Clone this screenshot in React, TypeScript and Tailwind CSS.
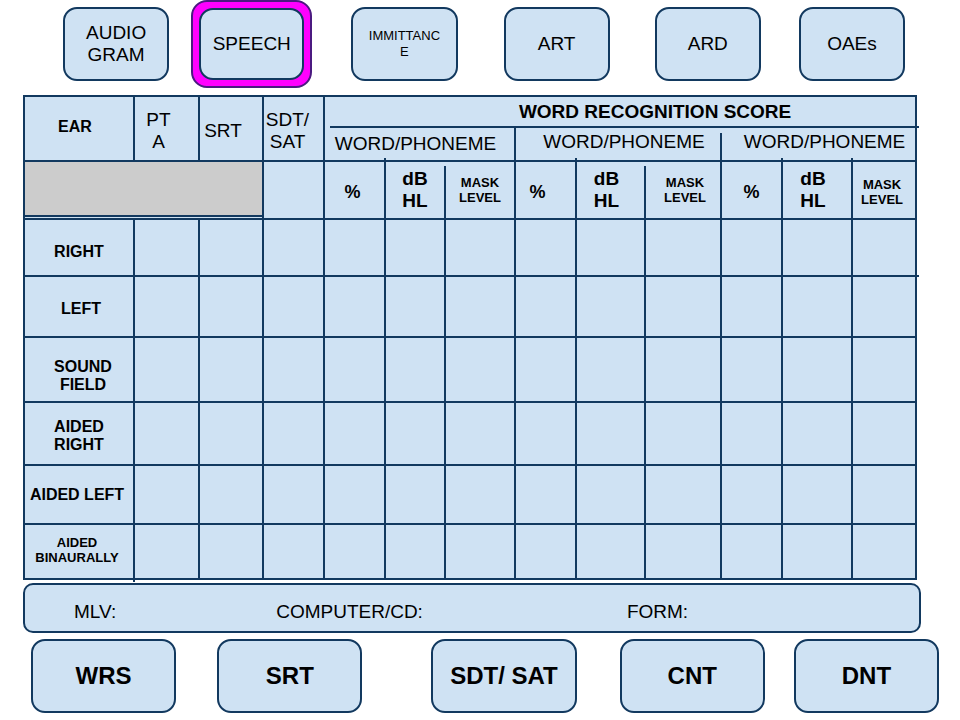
import React from "react";

const TABS = [
  { label: "AUDIO GRAM", box: "", text: "text-[19px] leading-[22px] px-4" },
  { label: "SPEECH", box: "ml-[22px]", text: "text-[19px] leading-[22px]", active: true },
  { label: "IMMITTANCE", box: "ml-[39px]", text: "text-[13px] leading-4 px-3 break-all" },
  { label: "ART", box: "ml-[46px]", text: "text-[19px] leading-[22px]" },
  { label: "ARD", box: "ml-[45px]", text: "text-[19px] leading-[22px]" },
  { label: "OAEs", box: "ml-[38px]", text: "text-[19px] leading-[22px]" },
];

const COLUMNS = [
  "w-[110px]",
  "w-[65px]",
  "w-[64px]",
  "w-[61px]",
  "w-[61px]",
  "w-[60px]",
  "w-[70px]",
  "w-[61px]",
  "w-[69px]",
  "w-[76px]",
  "w-[61px]",
  "w-[70px]",
  "w-[64px]",
];

const ROWS = [
  {
    lines: ["RIGHT"],
    height: "h-[57px]",
    text: "text-base leading-[18px] pt-2",
    last: "relative after:absolute after:-bottom-[2px] after:-right-1 after:h-[2px] after:w-1 after:bg-[#12395f]",
  },
  { lines: ["LEFT"], height: "h-[61px]", text: "text-base leading-[18px] pl-1 pt-1", last: "" },
  { lines: ["SOUND", "FIELD"], height: "h-[65px]", text: "text-base leading-[18px] pl-2 pt-3", last: "" },
  { lines: ["AIDED", "RIGHT"], height: "h-[63px]", text: "text-base leading-[18px] pt-1", last: "" },
  { lines: ["AIDED LEFT"], height: "h-[59px]", text: "text-base leading-[18px] pr-1 whitespace-nowrap", last: "" },
  {
    lines: ["AIDED", "BINAURALLY"],
    height: "h-[55px]",
    text: "relative text-[13px] leading-[15px] pb-1 pr-1 after:absolute after:-bottom-1 after:-right-[2px] after:h-1 after:w-[2px] after:bg-[#12395f]",
    last: "",
  },
];

const LINE_ABOVE =
  "relative after:absolute after:-left-[2px] after:-top-1 after:h-1 after:w-[2px] after:bg-[#12395f]";
const LINE_GAP =
  "relative after:absolute after:-left-[2px] after:top-0 after:h-1 after:w-[2px] after:bg-[#cfe2f3]";

const GROUPS = [
  { text: "pr-2", percent: "pr-1", level: "", mask: LINE_GAP },
  { text: "pl-3 pb-1", percent: "pr-4", level: "pr-2", mask: `pl-1 ${LINE_GAP}` },
  {
    text: `pl-3 pb-1 relative after:absolute after:-left-[2px] after:top-px after:h-[5px] after:w-[2px] after:bg-[#cfe2f3]`,
    percent: "",
    level: "pr-2",
    mask: `pt-1 pr-1 ${LINE_ABOVE}`,
  },
];

const FIELDS = [
  { id: "mlv", label: "MLV:", grow: "grow-[200]" },
  { id: "computer", label: "COMPUTER/CD:", grow: "grow-[347]" },
  { id: "form", label: "FORM:", grow: "grow-[289]" },
];

const ACTIONS = [
  { label: "WRS", box: "" },
  { label: "SRT", box: "ml-[41px]" },
  { label: "SDT/ SAT", box: "ml-[69px]" },
  { label: "CNT", box: "ml-[43px]" },
  { label: "DNT", box: "ml-[29px]" },
];

const cell = "border-2 border-[#12395f] p-0";
const button =
  "flex items-center justify-center rounded-[14px] border-2 border-[#12395f] bg-[#cfe2f3] text-center";

function Lines({ items }: { items: string[] }) {
  return (
    <>
      {items.map((line) => (
        <span key={line} className="block">
          {line}
        </span>
      ))}
    </>
  );
}

function Tabs() {
  return (
    <nav className="flex h-[88px] items-center pl-[63px] pr-[55px]">
      {TABS.map((tab) =>
        tab.active ? (
          <div
            key={tab.label}
            className={`flex h-full grow basis-[121px] rounded-[16px] border-2 border-[#4b1a80] bg-[#ff00ff] p-[6px] ${tab.box}`}
          >
            <button type="button" aria-current="page" className={`w-full ${button} ${tab.text}`}>
              {tab.label}
            </button>
          </div>
        ) : (
          <button
            key={tab.label}
            type="button"
            className={`h-[74px] grow basis-[106px] ${button} ${tab.box}`}
          >
            <span className={tab.text}>{tab.label}</span>
          </button>
        ),
      )}
    </nav>
  );
}

function ScoreTable() {
  return (
    <table className="w-full table-fixed border-collapse bg-[#cfe2f3] text-center">
      <colgroup>
        {COLUMNS.map((width, i) => (
          <col key={i} className={width} />
        ))}
      </colgroup>
      <thead className="text-[19px] leading-[22px]">
        <tr className="h-[31px]">
          <th rowSpan={2} className={`${cell} pb-1 pr-2 text-base font-bold`}>EAR</th>
          <th rowSpan={2} className={`${cell} pr-4 pt-1 font-normal`}>
            <Lines items={["PT", "A"]} />
          </th>
          <th rowSpan={2} className={`${cell} pr-4 pt-1 font-normal`}>SRT</th>
          <th rowSpan={2} className={`${cell} pr-3 pt-1 font-normal`}>
            <Lines items={["SDT/", "SAT"]} />
          </th>
          <th
            colSpan={9}
            className={`${cell} relative border-b-0 pl-[70px] font-bold after:absolute after:-bottom-px after:-right-1 after:left-[5px] after:h-[2px] after:bg-[#12395f]`}
          >
            WORD RECOGNITION SCORE
          </th>
        </tr>
        <tr className="h-[34px]">
          {GROUPS.map((group, i) => (
            <th key={i} colSpan={3} className={`${cell} border-t-0 font-normal ${group.text}`}>
              WORD/PHONEME
            </th>
          ))}
        </tr>
        <tr className="h-[58px]">
          <td colSpan={3} className={cell}>
            <div className="mb-px h-[55px] border-b-2 border-[#12395f] bg-[#cccccc]" />
          </td>
          <td className={cell} />
          {GROUPS.map((group, i) => (
            <React.Fragment key={i}>
              <th className={`${cell} pt-1 text-lg font-bold ${group.percent}`}>%</th>
              <th className={`${cell} font-bold ${LINE_ABOVE} ${group.level}`}>
                <Lines items={["dB", "HL"]} />
              </th>
              <th className={`${cell} text-[13px] font-bold leading-[15px] ${group.mask}`}>
                <Lines items={["MASK", "LEVEL"]} />
              </th>
            </React.Fragment>
          ))}
        </tr>
      </thead>
      <tbody>
        {ROWS.map((row) => (
          <tr key={row.lines.join(" ")} className={row.height}>
            <th scope="row" className={`${cell} font-bold ${row.text}`}>
              <Lines items={row.lines} />
            </th>
            {COLUMNS.slice(1).map((_, i) => (
              <td key={i} className={`${cell} ${i === 11 ? row.last : ""}`} />
            ))}
          </tr>
        ))}
      </tbody>
    </table>
  );
}

export default function App() {
  return (
    <main className="bg-white font-['Liberation_Sans',Arial,sans-serif] text-black">
      <Tabs />
      <div className="pl-[23px] pr-[43px] pt-[7px]">
        <ScoreTable />
      </div>
      <form className="ml-[23px] mr-[39px] mt-[3px] flex h-[50px] items-center rounded-[10px] border-2 border-[#12395f] bg-[#cfe2f3] pl-[49px] pt-2 text-[19px] leading-[22px]">
        {FIELDS.map((field) => (
          <div key={field.id} className={`flex basis-0 ${field.grow}`}>
            <label htmlFor={field.id}>{field.label}</label>
            <input id={field.id} className="ml-1 w-0 min-w-0 grow bg-transparent outline-none" />
          </div>
        ))}
      </form>
      <div className="flex pl-[31px] pr-[21px] pt-[6px]">
        {ACTIONS.map((action) => (
          <button
            key={action.label}
            type="button"
            className={`h-[74px] grow basis-0 text-2xl font-bold ${button} ${action.box}`}
          >
            {action.label}
          </button>
        ))}
      </div>
    </main>
  );
}
